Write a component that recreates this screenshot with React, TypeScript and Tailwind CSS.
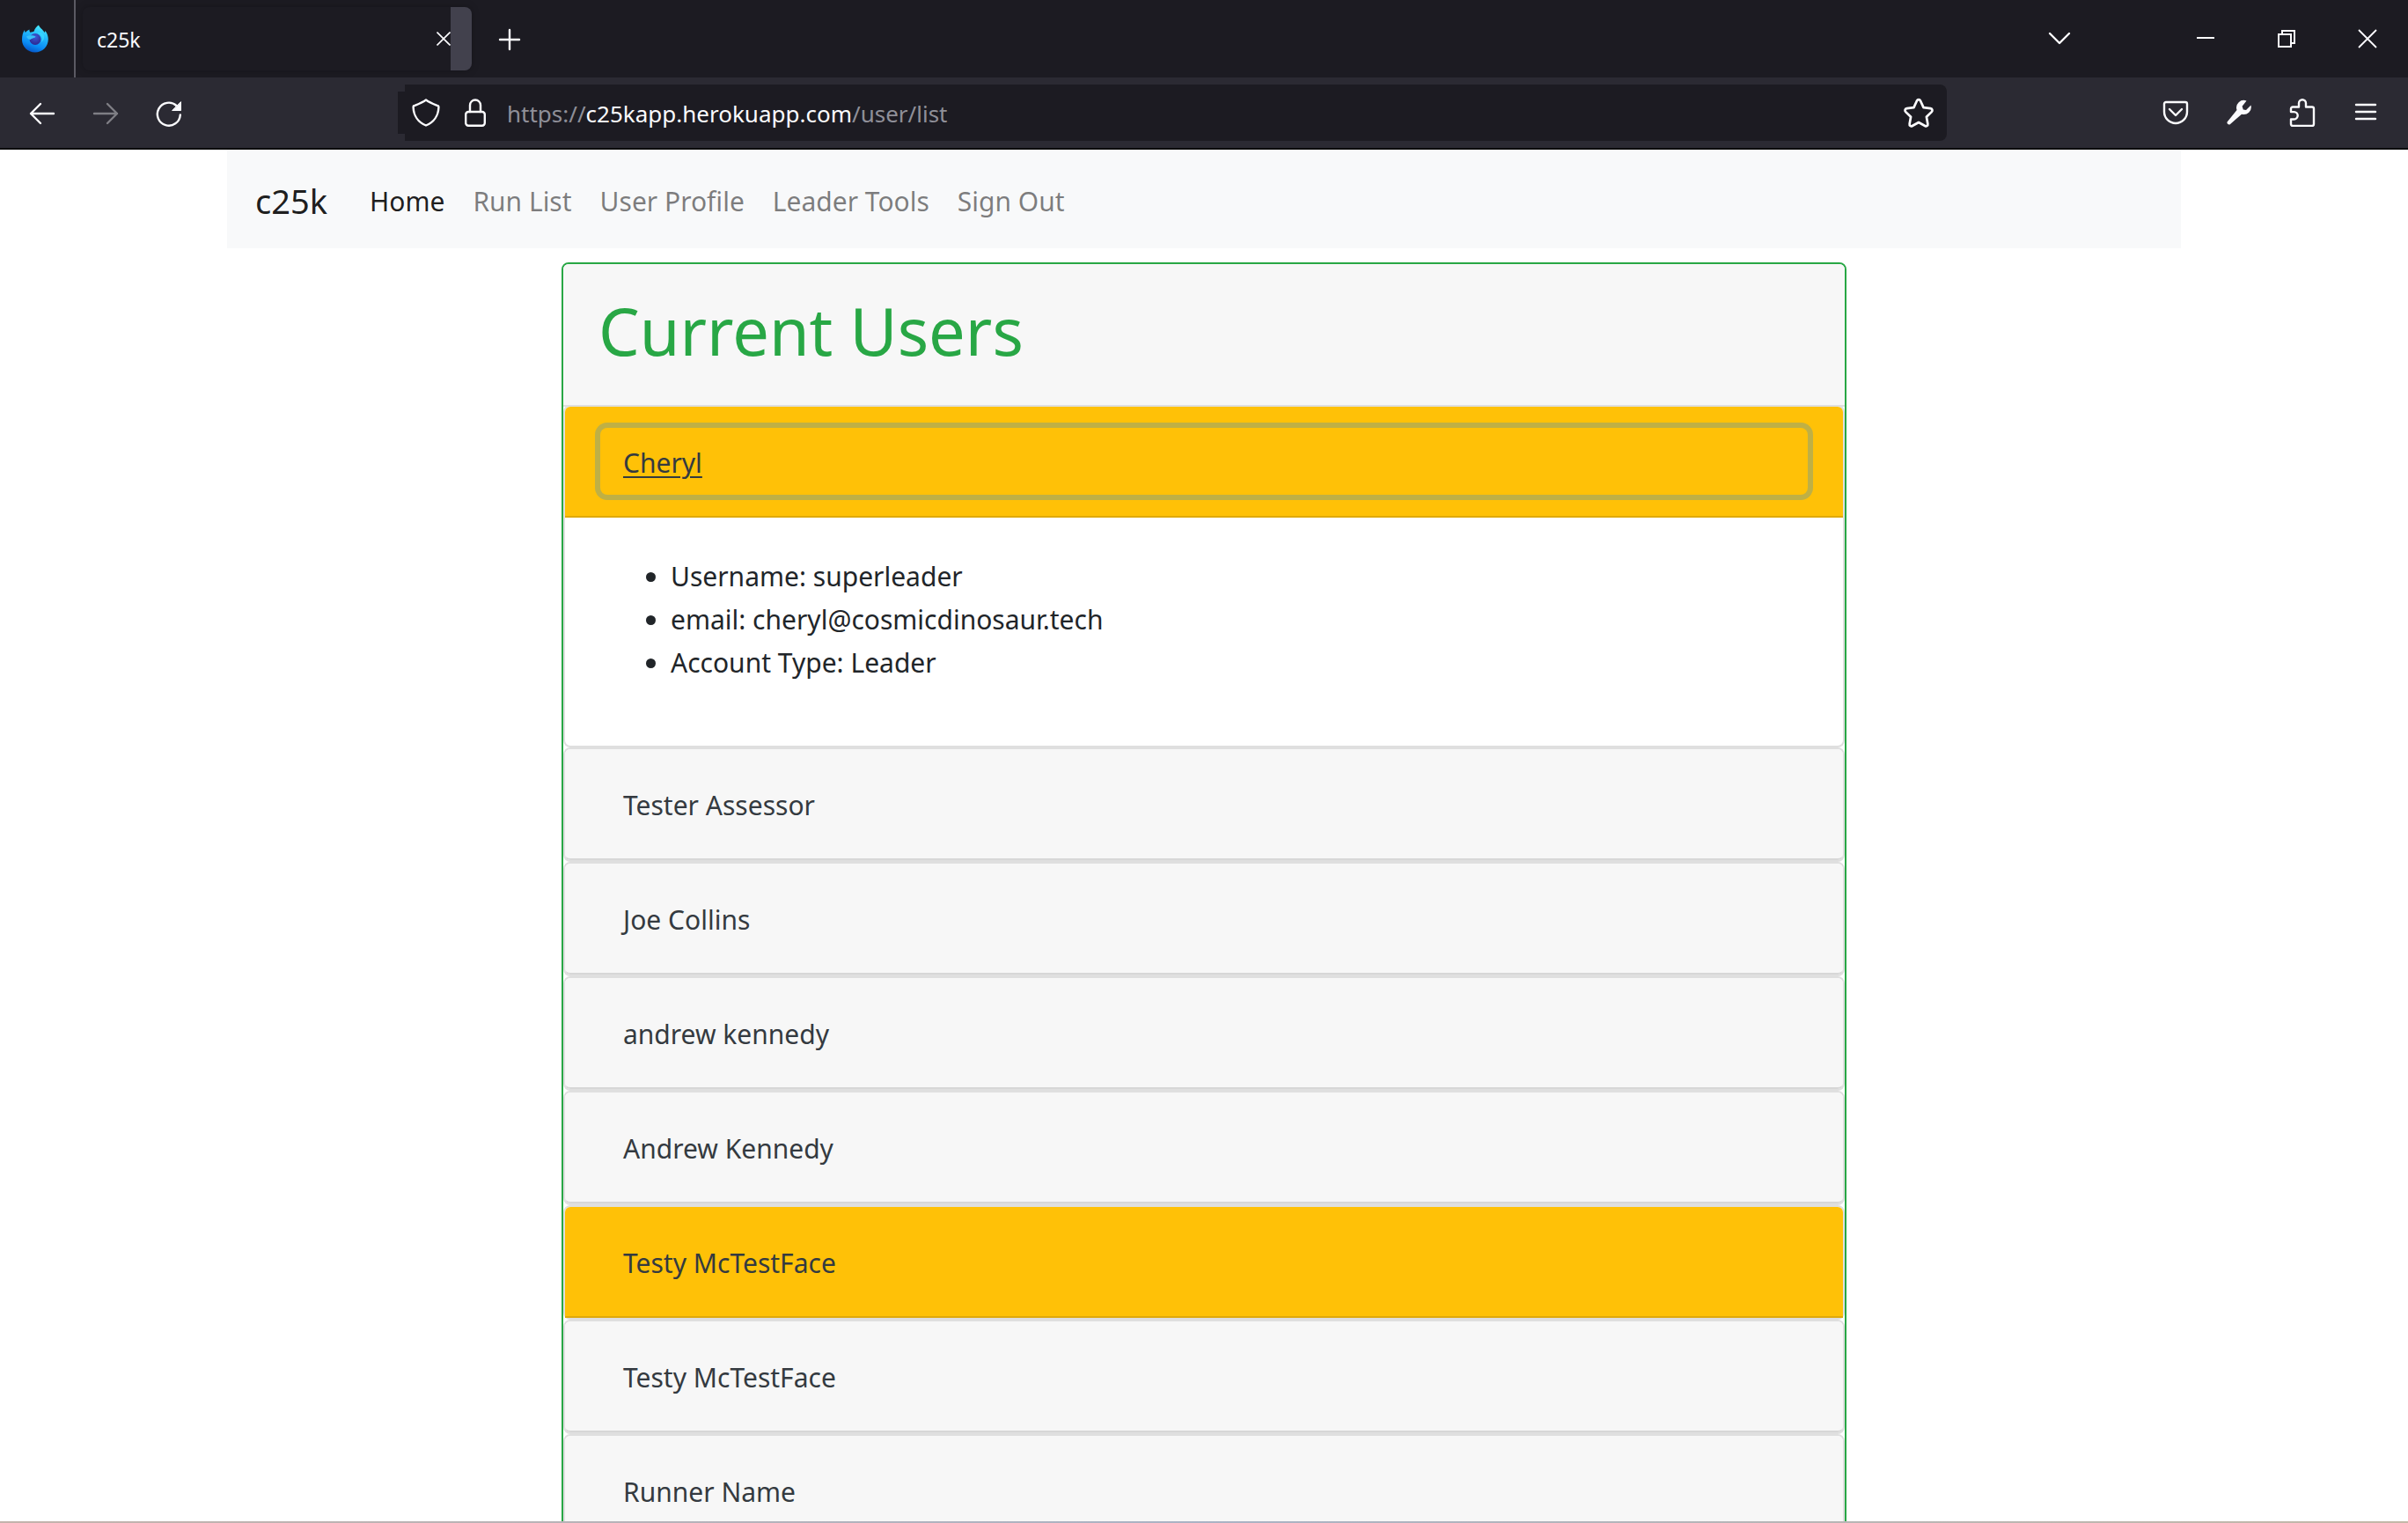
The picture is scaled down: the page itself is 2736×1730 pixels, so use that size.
import React from "react";

const users = [
  { name: "Cheryl", leader: true, open: true },
  { name: "Tester Assessor" },
  { name: "Joe Collins" },
  { name: "andrew kennedy" },
  { name: "Andrew Kennedy" },
  { name: "Testy McTestFace", leader: true },
  { name: "Testy McTestFace" },
  { name: "Runner Name" },
] as { name: string; leader?: boolean; open?: boolean }[];

const details = ["Username: superleader", "email: cheryl@cosmicdinosaur.tech", "Account Type: Leader"];

const links = ["Home", "Run List", "User Profile", "Leader Tools", "Sign Out"];

function Icon({ children, className = "size-8" }: { children: React.ReactNode; className?: string }) {
  return (
    <svg viewBox="0 0 32 32" className={className} fill="none" stroke="currentColor" strokeWidth="2.4" strokeLinecap="round" strokeLinejoin="round" aria-hidden="true">
      {children}
    </svg>
  );
}

function BarButton({ label, children, className = "" }: { label: string; children: React.ReactNode; className?: string }) {
  return (
    <button type="button" aria-label={label} className={"flex items-center justify-center shrink-0 text-[#fbfbfe] " + className}>
      {children}
    </button>
  );
}

function Logo() {
  return (
    <svg viewBox="0 0 32 32" className="size-8" aria-hidden="true">
      <defs>
        <linearGradient id="flame" x1="0.75" y1="0" x2="0.4" y2="1">
          <stop offset="0" stopColor="#4df0ff" />
          <stop offset="0.4" stopColor="#22b8fb" />
          <stop offset="0.75" stopColor="#0a8cf5" />
          <stop offset="1" stopColor="#0657c8" />
        </linearGradient>
        <radialGradient id="globe" cx="0.5" cy="0.3" r="0.8">
          <stop offset="0" stopColor="#3b5bd6" />
          <stop offset="1" stopColor="#2b1f86" />
        </radialGradient>
      </defs>
      <path fill="url(#flame)" d="M4 6c0 1 .3 2 .8 3 1.200-1.500 2.800-2.700 4.700-3.500-.2 1.300 0 2.400.8 3.300 1.700-.2 3.200-.5 4.400-1.300.8-3 2.800-5.500 5.300-7 .8 3 4.500 4.500 6.500 8.500.5-.6.8-1.300.9-2 2.400 3 3.400 6.500 3.400 9.500C30.800 25 24.200 31.500 15.800 31.500S1 25 1 17C1 12.500 2 8.500 4 6z" />
      <circle cx="16" cy="16.500" r="6.500" fill="url(#globe)" />
      <path fill="#38c0f8" d="M6 13.500c3-1.800 8-1.800 10.500 0-1 2-4.500 1.800-6 3.500-2 0-3.500-1.500-4.500-3.500z" />
      <path fill="#3ad7ff" fillOpacity="0.8" d="M18 9.500c5 2 7 5.500 5 10.500 4-3 4.500-8 .5-10.500-1.800-1-4-1.200-5.500 0z" />
    </svg>
  );
}

function TabStrip() {
  return (
    <div className="flex h-[88px] items-stretch bg-[#1c1b22]">
      <div className="flex w-[86px] items-center border-r-2 border-[#5b5a63] pl-6">
        <Logo />
      </div>
      <div className="my-2 ml-2 flex w-[442px] items-center overflow-hidden rounded-lg pl-4 shadow-[0_0_8px_rgba(0,0,0,0.25)]">
        <span className="flex-1 pt-0.5 text-[23px] text-[#fbfbfe]">c25k</span>
        <BarButton label="Close tab">
          <svg viewBox="0 0 16 16" className="size-4" stroke="currentColor" strokeWidth="1.6" aria-hidden="true">
            <path d="M0.500 0.500L15.500 15.500M15.500 0.500L0.500 15.500" />
          </svg>
        </BarButton>
        <div className="h-full w-6 bg-[#42414d]" />
      </div>
      <BarButton label="New tab" className="ml-[27px] pt-0.5">
        <Icon>
          <path d="M16 5v22M5 16h22" />
        </Icon>
      </BarButton>
      <div className="flex-1" />
      <BarButton label="List all tabs" className="w-16">
        <Icon>
          <path d="M5 10l11 11 11-11" />
        </Icon>
      </BarButton>
      <BarButton label="Minimize" className="ml-[88px] w-[92px]">
        <svg viewBox="0 0 20 20" className="size-5" stroke="currentColor" strokeWidth="2" aria-hidden="true">
          <path d="M0 9h20" />
        </svg>
      </BarButton>
      <BarButton label="Restore" className="w-[92px]">
        <svg viewBox="0 0 20 20" className="size-5" fill="none" stroke="currentColor" strokeWidth="2" aria-hidden="true">
          <path d="M1 5h14v14H1zM5 5V1h14v14h-4" />
        </svg>
      </BarButton>
      <BarButton label="Close window" className="w-[92px]">
        <svg viewBox="0 0 22 22" className="size-[22px]" stroke="currentColor" strokeWidth="1.8" aria-hidden="true">
          <path d="M1 1l20 20M21 1L1 21" />
        </svg>
      </BarButton>
    </div>
  );
}

function Toolbar() {
  return (
    <div className="flex h-[82px] items-center border-b-2 border-[#0c0c0d] bg-[#2b2a33]">
      <BarButton label="Back" className="ml-8">
        <Icon>
          <path d="M29 17H3M14 6L3 17l11 11" />
        </Icon>
      </BarButton>
      <BarButton label="Forward" className="ml-10 opacity-40">
        <Icon>
          <path d="M3 17h26M18 6l11 11-11 11" />
        </Icon>
      </BarButton>
      <BarButton label="Reload" className="ml-10">
        <Icon>
          <path d="M28.800 18.500A13 13 0 1 1 24.500 8" />
          <path d="M29.500 4v9.500H20z" fill="currentColor" strokeWidth="1" />
        </Icon>
      </BarButton>
      <div className="ml-[244px] h-12 w-2 bg-[#1c1b22]" />
      <div className="flex h-16 w-[1752px] items-center rounded-r-lg bg-[#1c1b22] pr-[14px]">
        <BarButton label="Tracking protection" className="ml-2">
          <Icon>
            <path d="M16 1.500c4 3 8 4.500 13 6.500 1 0 1.500 1 1.400 2C30 19 25 27 16 30.500 7 27 2 19 1.600 10c0-1 .4-2 1.400-2 5-2 9-3.500 13-6.500z" />
          </Icon>
        </BarButton>
        <BarButton label="Site information" className="ml-6">
          <Icon>
            <rect x="5.200" y="15" width="21.600" height="15.800" rx="3" />
            <path d="M10 15V7.500a6 6 0 0 1 12 0V15" />
          </Icon>
        </BarButton>
        <div className="ml-5 flex-1 pt-0.5 text-[26px] text-[#8f8f98]">
          https://<span className="text-[#fbfbfe]">c25kapp.herokuapp.com</span>/user/list
        </div>
        <BarButton label="Bookmark this page">
          <Icon className="size-9">
            <path d="M16 2.800c.9 0 1.500.6 1.900 1.400l3 6.600 7 .9c1.900.3 2.500 2.200 1.200 3.500l-5.200 5 1.300 7.200c.3 1.700-1.300 2.700-2.800 1.900L16 25.800l-6.400 3.500c-1.500.8-3.100-.2-2.800-1.900l1.300-7.200-5.200-5c-1.300-1.300-.7-3.200 1.200-3.500l7-.9 3-6.600c.4-.8 1-1.400 1.900-1.400z" />
          </Icon>
        </BarButton>
      </div>
      <div className="flex-1" />
      <div className="flex items-center gap-10 pr-8">
        <BarButton label="Save to Pocket">
          <Icon>
            <path d="M5 4h22a2 2 0 0 1 2 2v9a13 13 0 0 1-26 0V6a2 2 0 0 1 2-2z" />
            <path d="M9 12l7 7 7-7" />
          </Icon>
        </BarButton>
        <BarButton label="Developer tools">
          <Icon>
            <path stroke="none" fill="currentColor" d="M24.500 2.500a8.400 8.400 0 0 0-11 10.500L2.800 26.200c-1.400 1.800 1.200 4.300 3 3L19 17.700A8.400 8.400 0 0 0 29.500 7.500L24 13l-3.200-.6-1.200-3.600z" />
          </Icon>
        </BarButton>
        <BarButton label="Extensions">
          <Icon>
            <path d="M12 9.500V5.200a4 4 0 0 1 8 0v4.300h7a2 2 0 0 1 2 2V29a2 2 0 0 1-2 2H5a2 2 0 0 1-2-2v-5.500h3.500a4.200 4.200 0 0 0 0-8.400H3v-3.600a2 2 0 0 1 2-2z" />
          </Icon>
        </BarButton>
        <BarButton label="Open menu">
          <Icon>
            <path d="M5 7h22M5 15h22M5 23h22" />
          </Icon>
        </BarButton>
      </div>
    </div>
  );
}

export default function App() {
  return (
    <div className="flex h-screen flex-col overflow-hidden bg-white font-['Noto_Sans',sans-serif] text-[#212529]">
      <TabStrip />
      <Toolbar />
      <main className="mx-auto min-h-0 w-full max-w-[2220px] flex-1 overflow-hidden">
        <nav className="flex h-28 items-center bg-[#f8f9fa] px-8 pt-1">
          <a href="#" className="text-[38px] text-black/90">c25k</a>
          <div className="ml-12 flex gap-8 text-[30px]">
            {links.map((link) => (
              <a key={link} href="#" className={link === "Home" ? "text-black/90" : "text-black/50"}>
                {link}
              </a>
            ))}
          </div>
        </nav>
        <section className="mx-auto mt-4 max-w-[1460px] rounded-lg border-2 border-[#28a745]">
          <header className="-mb-[2px] rounded-t-md border-b-2 border-[#dfdfdf] bg-[#f7f7f7] px-10 pt-7 pb-9">
            <h1 className="text-[74px] leading-[96px] text-[#28a745]">Current Users</h1>
          </header>
          {users.map((user, i) => (
            <article key={i} className="rounded-lg border-2 border-[#dfdfdf]">
              <h2
                className={
                  user.leader
                    ? "rounded-t-md border-b-2 border-[#dfa90b] bg-[#ffc107] px-10 py-6"
                    : "rounded-md border-b-2 border-[#d7d7d7] bg-[#f7f7f7] px-10 py-6"
                }
              >
                <button
                  type="button"
                  aria-expanded={!!user.open}
                  className={
                    user.open
                      ? "block w-full rounded-lg px-[26px] pt-4 pb-3 text-left text-[30px] leading-[48px] text-[#343a40] underline decoration-2 underline-offset-4 shadow-[0_0_0_6px_#bfb045]"
                      : "block w-full rounded-lg px-[26px] pt-4 pb-3 text-left text-[30px] leading-[48px] text-[#343a40]"
                  }
                >
                  {user.name}
                </button>
              </h2>
              {user.open && (
                <div className="px-10 pt-[42px] pb-[70px]">
                  <ul className="list-disc pl-20 text-[30px] leading-[49px]">
                    {details.map((line) => (
                      <li key={line}>{line}</li>
                    ))}
                  </ul>
                </div>
              )}
            </article>
          ))}
        </section>
      </main>
      <div className="h-[2px] shrink-0 bg-linear-to-r from-[#c4b3ac] via-[#abb3c4] to-[#c4b8a8]" />
    </div>
  );
}
